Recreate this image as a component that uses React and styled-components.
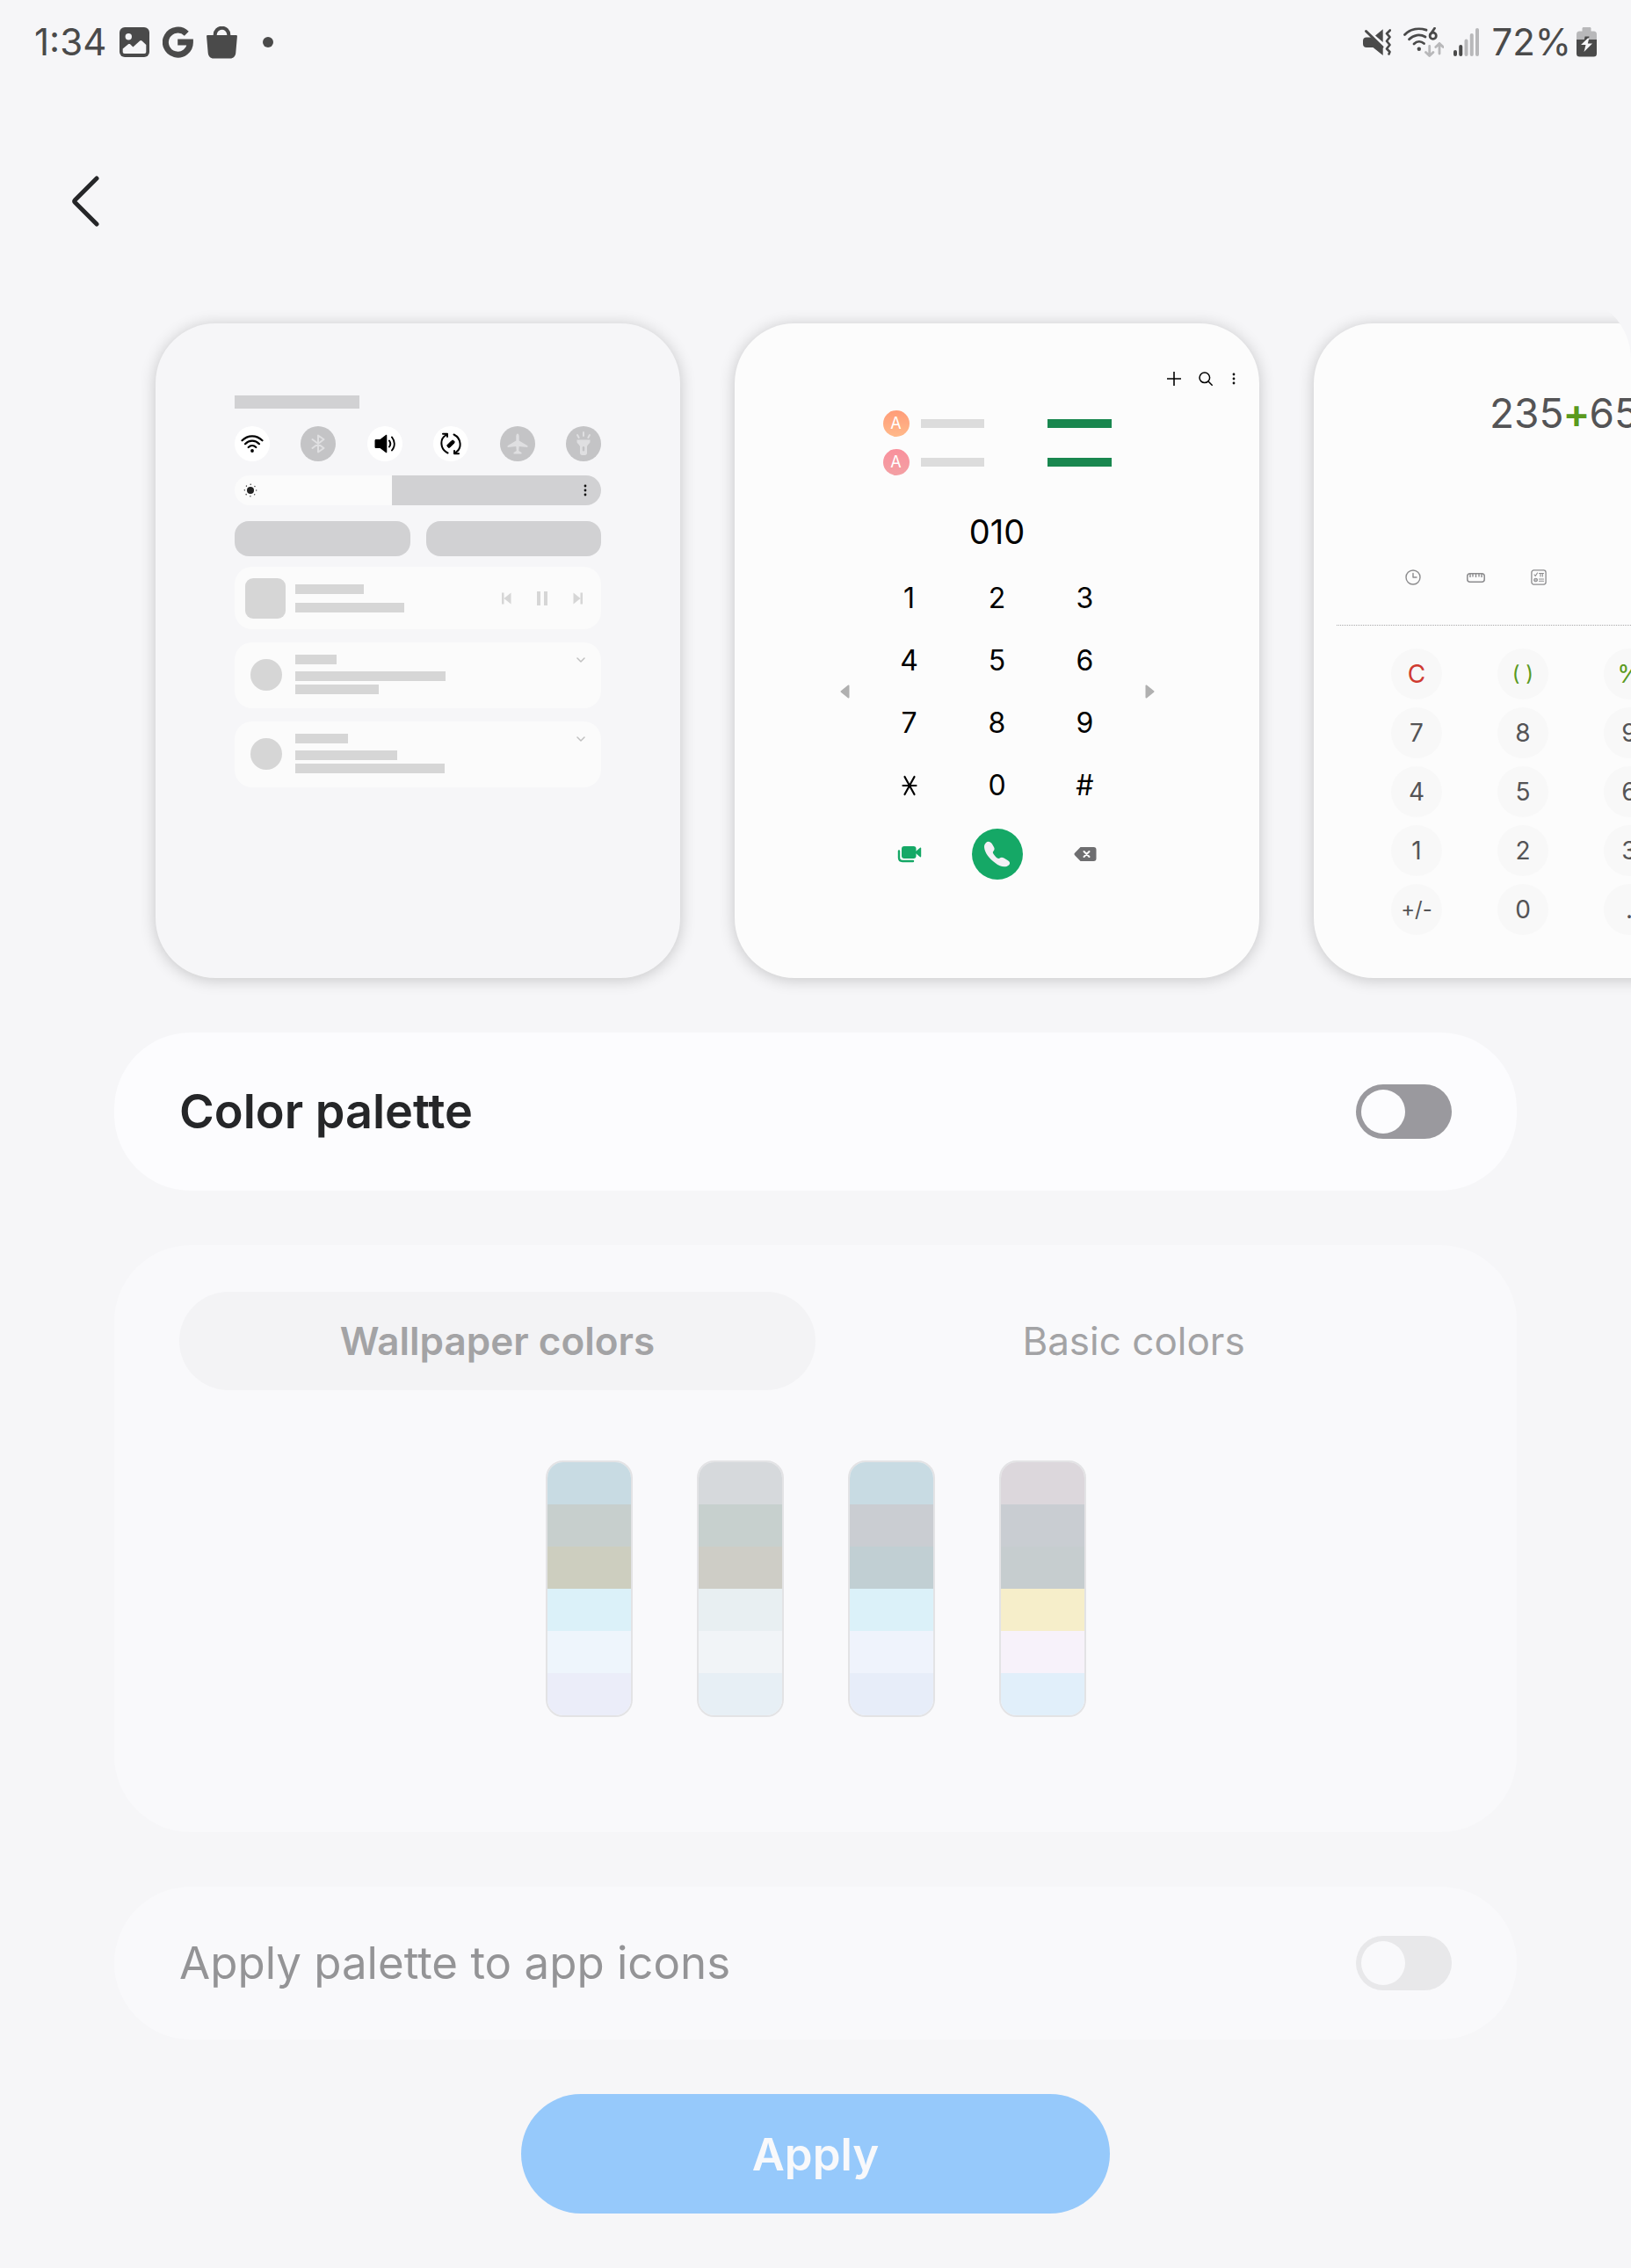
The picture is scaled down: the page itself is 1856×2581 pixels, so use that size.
import React, { useState } from "react";
import styled, { createGlobalStyle } from "styled-components";

const GlobalStyle = createGlobalStyle`
  * { box-sizing: border-box; }
  body {
    margin: 0;
    background: #f6f6f8;
    font-family: Inter, Roboto, sans-serif;
    -webkit-font-smoothing: antialiased;
  }
  button { font-family: inherit; border: 0; padding: 0; background: none; }
  svg { display: block; flex: none; }
`;

/* ---------- page frame ---------- */

const Page = styled.div`
  min-height: 100vh;
  background: #f6f6f8;
  overflow: hidden;
`;

const StatusBar = styled.header`
  display: flex;
  align-items: center;
  justify-content: space-between;
  height: 96px;
  padding: 0 39px;
  color: #4a4a4a;
  font-size: 42px;
  line-height: 50px;
`;

const StatusGroup = styled.div`
  display: flex;
  align-items: center;
  gap: ${(p) => p.$gap}px;
`;

const MoreDot = styled.span`
  width: 12px;
  height: 12px;
  margin-left: 14px;
  border-radius: 50%;
  background: currentColor;
`;

const AppBar = styled.nav`
  padding: 93px 57px 68px;
`;

const BackButton = styled.button`
  display: flex;
  align-items: center;
  justify-content: center;
  width: 80px;
  height: 80px;
  color: #252628;
`;

/* ---------- preview carousel ---------- */

const Carousel = styled.section`
  display: flex;
  gap: 62px;
  padding: 31px 0 62px 177px;
  border-top-right-radius: 72px;
  overflow: hidden;
`;

const PreviewCard = styled.article`
  display: flex;
  flex-direction: column;
  flex: none;
  width: 597px;
  height: 745px;
  border-radius: 68px;
  background: ${(p) => p.$bg};
  box-shadow: 0 2px 18px rgba(0, 0, 0, 0.2);
`;

const PanelPreview = styled(PreviewCard)`
  padding: 82px 90px;
`;

const Bar = styled.div`
  width: ${(p) => p.$w}px;
  height: ${(p) => p.$h || 11}px;
  background: ${(p) => p.$c || "#d6d6d6"};
`;

const ToggleRow = styled.div`
  display: flex;
  justify-content: space-between;
  margin-top: 20px;
`;

const RoundToggle = styled.div`
  display: flex;
  align-items: center;
  justify-content: center;
  width: 40px;
  height: 40px;
  border-radius: 50%;
  background: ${(p) => (p.$on ? "#ffffff" : "#c4c4c6")};
  color: ${(p) => (p.$on ? "#000000" : "#dfdfe1")};
`;

const Brightness = styled.div`
  display: flex;
  align-items: center;
  justify-content: space-between;
  height: 34px;
  margin-top: 16px;
  padding: 0 14px 0 10px;
  border-radius: 17px;
  background: linear-gradient(90deg, #fbfbfb 43%, #d1d1d3 43%);
`;

const PillRow = styled.div`
  display: grid;
  grid-template-columns: 1fr 1fr;
  gap: 18px;
  margin-top: 18px;
`;

const Pill = styled.div`
  height: 40px;
  border-radius: 16px;
  background: #d1d1d3;
`;

const Notice = styled.div`
  display: flex;
  align-items: ${(p) => (p.$media ? "center" : "flex-start")};
  height: ${(p) => (p.$media ? 71 : 75)}px;
  margin-top: ${(p) => (p.$media ? 12 : 15)}px;
  padding: ${(p) => (p.$media ? "0 20px 0 12px" : "14px 18px 0")};
  border-radius: 20px;
  background: #fbfbfb;
`;

const Thumb = styled.div`
  width: ${(p) => p.$size}px;
  height: ${(p) => p.$size}px;
  margin-top: ${(p) => (p.$round ? 5 : 0)}px;
  border-radius: ${(p) => (p.$round ? "50%" : "9px")};
  background: #d6d6d6;
`;

const Lines = styled.div`
  display: flex;
  flex: 1;
  flex-direction: column;
  gap: ${(p) => p.$gap}px;
  margin-left: ${(p) => p.$left}px;
`;

const MediaKeys = styled.div`
  display: flex;
  align-items: center;
  gap: 29px;
  color: #d6d6d6;
`;

const TextStack = styled.div`
  display: flex;
  flex-direction: column;
  gap: 4px;
  margin-top: 4px;
`;

/* ---------- dialer preview ---------- */

const DialPreview = styled(PreviewCard)`
  align-items: center;
`;

const DialTools = styled.div`
  display: flex;
  align-self: stretch;
  align-items: center;
  justify-content: flex-end;
  gap: 20px;
  height: 24px;
  margin-top: 51px;
  padding-right: 25px;
`;

const Contacts = styled.div`
  display: flex;
  flex-direction: column;
  gap: 14px;
  width: 260px;
  margin-top: 24px;
`;

const Contact = styled.div`
  display: flex;
  align-items: center;
  justify-content: space-between;
`;

const ContactName = styled.div`
  display: flex;
  align-items: center;
  gap: 13px;
`;

const Avatar = styled.span`
  width: 30px;
  border-radius: 50%;
  background: ${(p) => p.$bg};
  color: #fff;
  font-size: 18px;
  line-height: 30px;
  text-align: center;
`;

const Dialed = styled.output`
  margin-top: 40px;
  color: #000;
  font-size: 38px;
  line-height: 48px;
`;

const DialBody = styled.div`
  display: flex;
  align-items: center;
  justify-content: space-between;
  width: 358px;
  margin-top: 16px;
`;

const DialGrid = styled.div`
  display: grid;
  grid-template-columns: repeat(3, 100px);
`;

const DialKey = styled.button`
  display: flex;
  align-items: center;
  justify-content: center;
  height: 71px;
  color: #000;
  font-size: 32px;
`;

const DialActions = styled(DialGrid)`
  align-items: center;
  justify-items: center;
  margin-top: 14px;
`;

const CallButton = styled.button`
  width: 58px;
  height: 58px;
  border-radius: 50%;
  background: #15a866;
`;

/* ---------- calculator preview ---------- */

const Display = styled.output`
  display: flex;
  align-items: center;
  margin-top: 74px;
  padding-left: 200px;
  color: #545456;
  font-size: 46px;
  line-height: 56px;
`;

const Operator = styled.span`
  display: flex;
  justify-content: center;
  width: 29px;
  color: #5a9a1e;
  font-weight: 600;
`;

const CalcTools = styled.div`
  display: flex;
  align-items: center;
  gap: 52px;
  height: 20px;
  margin-top: 149px;
  padding-left: 104px;
  color: #8c8c8e;
`;

const Divider = styled.hr`
  align-self: stretch;
  margin: 44px 26px 26px;
  border: 0;
  border-top: 1px dotted #a8a8aa;
`;

const CalcGrid = styled.div`
  display: grid;
  grid-template-columns: repeat(3, 58px);
  gap: 9px 63px;
  padding-left: 88px;
`;

const CalcKey = styled.button`
  height: 58px;
  border-radius: 50%;
  background: #f8f8f8;
  color: ${(p) => p.$c || "#545456"};
  font-size: ${(p) => (p.$small ? 24 : 28)}px;
  line-height: 58px;
  white-space: nowrap;
`;

/* ---------- settings ---------- */

const Settings = styled.main`
  display: flex;
  flex-direction: column;
  align-items: center;
  gap: 62px;
  padding: 0 130px 62px;
`;

const SettingRow = styled.section`
  display: flex;
  align-items: center;
  justify-content: space-between;
  align-self: stretch;
  height: ${(p) => (p.$dim ? 174 : 180)}px;
  padding: 0 74px;
  border-radius: 87px;
  background: ${(p) => (p.$dim ? "#f9f9fb" : "#fcfcfe")};
`;

const SettingLabel = styled.label`
  color: ${(p) => (p.$dim ? "#949496" : "#252628")};
  font-size: ${(p) => (p.$dim ? 51 : 54)}px;
  font-weight: ${(p) => (p.$dim ? 400 : 600)};
  line-height: 68px;
`;

const Switch = styled.input`
  appearance: none;
  display: flex;
  align-items: center;
  justify-content: ${(p) => (p.checked ? "flex-end" : "flex-start")};
  width: 109px;
  height: 62px;
  margin: 0;
  padding: 0 6px;
  border-radius: 31px;
  background: #9a999e;

  &::before {
    content: "";
    width: 50px;
    height: 50px;
    border-radius: 50%;
    background: #fcfcfe;
  }

  &:disabled { background: #e8e8ea; }
  &:disabled::before { background: #f9f9fb; }
`;

const PalettePanel = styled.section`
  align-self: stretch;
  padding: 53px 74px 131px;
  border-radius: 87px;
  background: #f9f9fb;
`;

const Tabs = styled.div`
  display: grid;
  grid-template-columns: 1fr 1fr;
`;

const Tab = styled.button`
  height: 112px;
  border-radius: 56px;
  background: ${(p) => (p["aria-selected"] ? "#f3f3f5" : "transparent")};
  color: #a3a3a5;
  font-size: 44px;
  font-weight: ${(p) => (p["aria-selected"] ? 600 : 400)};
`;

const Swatches = styled.div`
  display: flex;
  justify-content: center;
  gap: 73px;
  margin-top: 80px;
`;

const Swatch = styled.button`
  display: flex;
  flex-direction: column;
  width: 99px;
  border: 2px solid #e3e3e5;
  border-radius: 20px;
  overflow: hidden;
`;

const Tone = styled.span`
  align-self: stretch;
  height: 48px;
  background: ${(p) => p.$c};
`;

const ApplyButton = styled.button`
  width: 670px;
  max-width: 100%;
  height: 136px;
  border-radius: 68px;
  background: #96c9fb;
  color: #f8f9fb;
  font-size: 51px;
  font-weight: 600;
`;

/* ---------- icons ---------- */

const stroke = { fill: "none", stroke: "currentColor", strokeLinecap: "round", strokeLinejoin: "round" };

const ImageIcon = () => (
  <svg width="34" height="34" viewBox="0 0 34 34">
    <rect width="34" height="34" rx="6" fill="currentColor" />
    <circle cx="10.3" cy="10.8" r="3.7" fill="#f6f6f8" />
    <path d="M3.7 24.5 10 19.3c.7-.6 1.500-.5 2.100 0l3.300 3.200 7.700-7c.8-.8 1.600-.8 2.400 0l4.800 4.600V28c0 1.200-.8 2-2 2H5.700c-1.200 0-2-.8-2-2z" fill="#f6f6f8" />
  </svg>
);

const GIcon = () => (
  <svg width="35" height="36" viewBox="0 0 35 36">
    <path d="M27.3 8.2A14 14 0 1 0 31.4 18H17.2" fill="none" stroke="currentColor" strokeWidth="7" />
  </svg>
);

const BagIcon = () => (
  <svg width="35" height="37" viewBox="0 0 35 37">
    <path d="M9.7 12.5V9.5a7.800 7.800 0 0 1 15.600 0v3" fill="none" stroke="currentColor" strokeWidth="4" />
    <path d="M1.500 10h32c1 0 1.500.5 1.400 1.500L33.300 30c-.4 4-2.500 6.500-6.500 6.500H8.200c-4 0-6.100-2.500-6.500-6.500L.1 11.500C0 10.500.5 10 1.500 10z" fill="currentColor" />
  </svg>
);

const MuteIcon = () => (
  <svg width="32" height="30" viewBox="0 0 32 30">
    <path d="M14 7.500 22.700.3V15z" fill="currentColor" />
    <path d="M4 9.500h5L22.700 22v8L11.500 21H4c-2.500 0-4-1.500-4-4v-3.500c0-2.500 1.500-4 4-4z" fill="currentColor" />
    <path d="M3.500 2.500 22 20.500" {...stroke} strokeWidth="3" />
    <path d="M30.800 1.500 27 5.200l3.500 4-3.500 4.500 3.500 4.300-3.500 4.500 3.500 3.500-1 2.500" {...stroke} strokeWidth="2.600" />
  </svg>
);

const WifiStatusIcon = () => (
  <svg width="46" height="34" viewBox="0 0 46 34">
    <g {...stroke} strokeWidth="2.800">
      <path d="M1.500 8.500C8.500 1.500 18 .5 26 3.200" />
      <path d="M6.500 13.800C11.500 8.500 19 7.500 25 11" />
      <path d="M12 19c3.500-3.500 8-3.500 11.500-.5" />
    </g>
    <circle cx="17.800" cy="24.700" r="2.200" fill="currentColor" />
    <path d="M35.500 1.200 30.800 8" {...stroke} strokeWidth="2.800" />
    <circle cx="33.700" cy="9.800" r="3.600" fill="none" stroke="currentColor" strokeWidth="2.800" />
    <g {...stroke} stroke="#b8b8ba" strokeWidth="2.800">
      <path d="M29.700 21.500v11M25.500 28.500l4.200 4 4.200-4" />
      <path d="M41 30V18.500M36.800 22.500l4.200-4 4.200 4" />
    </g>
  </svg>
);

const SignalIcon = () => (
  <svg width="29" height="32" viewBox="0 0 29 32">
    {[25, 19, 12.5, 6, 0].map((y, i) => (
      <rect key={y} x={i * 6.25} y={y} width="4" height={32 - y} rx="2" fill={i < 2 ? "currentColor" : "#b8b8ba"} />
    ))}
  </svg>
);

const BatteryIcon = () => (
  <svg width="23" height="34" viewBox="0 0 23 34">
    <path d="M8 0h7c1 0 1.500.6 1.500 1.500V5h-10V1.500C6.500.6 7 0 8 0z" fill="#b8b8ba" />
    <path d="M3.500 4.500h16A3.500 3.500 0 0 1 23 8v6H0V8a3.500 3.500 0 0 1 3.500-3.500z" fill="#b8b8ba" />
    <path d="M0 14h23v16a3.500 3.500 0 0 1-3.500 3.500h-16A3.500 3.500 0 0 1 0 30z" fill="currentColor" />
    <path d="M9.500 10.500h5l-1 5-5 1z" fill="currentColor" />
    <path d="M12.800 12.500 5 20h5.500l-2 8L18 18.500h-5.200l1.500-6z" fill="#f6f6f8" />
  </svg>
);

const BackIcon = () => (
  <svg width="32" height="60" viewBox="0 0 32 60">
    <path d="M29 4 4.500 28.500c-1 1-1 2 0 3L29 56" {...stroke} strokeWidth="5" />
  </svg>
);

const WifiIcon = () => (
  <svg width="26" height="22" viewBox="0 0 26 22">
    <g {...stroke} strokeWidth="2.200">
      <path d="M1.500 7.300C8 .6 18 .6 24.500 7.300" />
      <path d="M5 11.200c4.500-4.700 11.500-4.700 16 0" />
      <path d="M8.700 15c2.500-2.400 6.100-2.400 8.600 0" />
    </g>
    <circle cx="13" cy="19" r="1.900" fill="currentColor" />
  </svg>
);

const BluetoothIcon = () => (
  <svg width="16" height="22" viewBox="0 0 16 22">
    <path d="m1.500 6 13 10L8 20.500v-19L14.500 6l-13 10" {...stroke} strokeWidth="2" />
  </svg>
);

const SoundIcon = () => (
  <svg width="24" height="22" viewBox="0 0 24 22">
    <path d="M2 6h4.500L13 1c.8-.6 1.300-.2 1.300.6v18.800c0 .8-.5 1.200-1.300.6L6.500 16H2c-1 0-1.500-.5-1.500-1.500v-7C.5 6.500 1 6 2 6z" fill="currentColor" />
    <path d="M17 7.500c1.600 2.200 1.600 4.800 0 7M20 3.500c3.600 4.600 3.600 10.400 0 15" {...stroke} strokeWidth="2" />
  </svg>
);

const RotateIcon = () => (
  <svg width="24" height="26" viewBox="0 0 24 26">
    <path d="M8.500 23.500C-.5 19-.5 7.500 6 3.500M3 1.800h5V5M15.500 2.500c9 4.500 9 16 2.500 20M21 24.200h-5V21" {...stroke} strokeWidth="2" />
    <path d="m8 14.500 5-5 1.500-.5 1.500 1.500v1.500l-5 5-1.500.5L8 16z" fill="currentColor" stroke="currentColor" />
  </svg>
);

const PlaneIcon = () => (
  <svg width="24" height="24" viewBox="0 0 24 24">
    <path d="M12 .5c1.100 0 1.700 1.500 1.700 3v5L23 14c.7.5.7 2 0 2l-9.300-1-.4 5 3 2c.6.5.5 1.500-.2 1.500H7.900c-.7 0-.8-1-.2-1.500l3-2-.4-5-9.300 1c-.7 0-.7-1.500 0-2l9.300-5.500v-5c0-1.500.6-3 1.700-3z" fill="currentColor" />
  </svg>
);

const TorchIcon = () => (
  <svg width="18" height="28" viewBox="0 0 18 28">
    <path d="M9 1v4M2 4l1.700 3M16 4l-1.700 3" {...stroke} strokeWidth="2" />
    <path d="M1.500 9.500h15v2.500c0 1.500-3.500 3.500-3.500 5.500v7c0 1.500-1 2.500-2.500 2.500h-3C6 27 5 26 5 24.500v-7c0-2-3.500-4-3.500-5.500z" fill="currentColor" />
    <rect x="7.800" y="17" width="2.400" height="5.500" rx="1.200" fill="#c4c4c6" />
  </svg>
);

const SunIcon = () => (
  <svg width="16" height="16" viewBox="0 0 16 16">
    <circle cx="8" cy="8" r="4" fill="#222" />
    <circle cx="8" cy="8" r="6.700" fill="none" stroke="#444" strokeWidth="1.400" strokeLinecap="round" strokeDasharray="0.1 5.162" />
  </svg>
);

const DotsIcon = () => (
  <svg width="8" height="16" viewBox="0 0 8 16">
    {[3, 8, 13].map((y) => (
      <circle key={y} cx="4" cy={y} r="1.400" fill="#111" />
    ))}
  </svg>
);

const SkipIcon = ({ forward }) => (
  <svg width="12" height="14" viewBox="0 0 12 14">
    <path d={forward ? "M.5.5v13L8.500 7zM8.500.5h2.500v13H8.500z" : "M11.500.5v13L3.500 7zM1 .5h2.500v13H1z"} fill="currentColor" />
  </svg>
);

const PauseIcon = () => (
  <svg width="12" height="16" viewBox="0 0 12 16">
    <path d="M0 0h4v16H0zM8 0h4v16H8z" fill="currentColor" />
  </svg>
);

const ChevronIcon = () => (
  <svg width="10" height="12" viewBox="0 0 10 12">
    <path d="m1 4 4 4 4-4" {...stroke} stroke="#c0c0c0" strokeWidth="1.500" />
  </svg>
);

const PlusIcon = () => (
  <svg width="16" height="16" viewBox="0 0 16 16">
    <path d="M8 .5v15M.5 8h15" {...stroke} strokeWidth="1.600" />
  </svg>
);

const SearchIcon = () => (
  <svg width="16" height="16" viewBox="0 0 16 16">
    <circle cx="6.800" cy="6.800" r="5.800" {...stroke} strokeWidth="1.500" />
    <path d="m11 11 4.200 4.200" {...stroke} strokeWidth="1.500" />
  </svg>
);

const ArrowIcon = ({ right }) => (
  <svg width="11" height="16" viewBox="0 0 11 16">
    <path d={right ? "M1.500 1.500v13l8-6.500z" : "M9.500 1.500v13L1.500 8z"} fill="#b0b0b0" stroke="#b0b0b0" strokeWidth="2" strokeLinejoin="round" />
  </svg>
);

const StarIcon = () => (
  <svg width="18" height="24" viewBox="0 0 18 24">
    <path d="M1.500 12h15M3.500 2l11 20M14.500 2l-11 20" {...stroke} strokeWidth="2.200" />
  </svg>
);

const VideoIcon = () => (
  <svg width="28" height="20" viewBox="0 0 28 20">
    <path d="M2 6.500V14c0 2.500 1.500 4 4 4h12" {...stroke} stroke="#15a866" strokeWidth="2.400" />
    <rect x="5" y="1" width="16.500" height="14" rx="3" fill="#15a866" />
    <path d="m21 7 5-4.200c.6-.5 1.200-.2 1.200.6v9.200c0 .8-.6 1.100-1.200.6L21 9z" fill="#15a866" />
  </svg>
);

const HandsetIcon = () => (
  <svg width="58" height="58" viewBox="0 0 58 58">
    <path d="M16 16c2-2 5-1.500 7 1.500l2 3.500c1 2 .8 3-.8 5-.8 1-.4 2 1.800 4.800s4 3.800 5.300 3c1.700-1.300 3.200-1.300 5.200-.3l4.500 2.800c2.500 1.600 2.800 3.700 1 5.200-3.500 3-9.500 2.500-15.500-2.500C19.500 34 14.500 27.500 14 21c0-2 .5-3.500 2-5z" fill="#f3f0f5" />
  </svg>
);

const BackspaceIcon = () => (
  <svg width="26" height="18" viewBox="0 0 26 18">
    <path d="M7.500 1h15C24.500 1 25.500 2 25.500 4v10c0 2-1 3-3 3h-15L1 10.200c-.7-.7-.7-1.700 0-2.400z" fill="#6e6e70" />
    <path d="m11.500 6 6 6M17.500 6l-6 6" {...stroke} stroke="#fff" strokeWidth="2" />
  </svg>
);

const ClockIcon = () => (
  <svg width="18" height="18" viewBox="0 0 18 18">
    <circle cx="9" cy="9" r="8" {...stroke} strokeWidth="1.400" />
    <path d="M9 4.500V9h4" {...stroke} strokeWidth="1.400" />
  </svg>
);

const RulerIcon = () => (
  <svg width="21" height="11" viewBox="0 0 21 11">
    <rect x=".8" y=".8" width="19.400" height="9.400" rx="3" {...stroke} strokeWidth="1.500" />
    <path d="M4 1v4M7 1v3.500M10.500 1v4M14 1v3.500M17 1v4" stroke="currentColor" strokeWidth="1.400" />
  </svg>
);

const FormulaIcon = () => (
  <svg width="18" height="18" viewBox="0 0 18 18">
    <rect x=".9" y=".9" width="16.200" height="16.200" rx="2.500" {...stroke} strokeWidth="1.300" />
    <path d="m4 6 1.200 1.500L7.500 4M9.500 4.500h5M11 4.500V8M13.300 4.500V8M9.500 11h5M9.500 13.300h5" {...stroke} strokeWidth="1.100" />
    <circle cx="5.600" cy="12" r="1.800" {...stroke} strokeWidth="1.100" />
    <path d="M4 12h3.500" {...stroke} strokeWidth="1" />
  </svg>
);

/* ---------- data ---------- */

const palettes = [
  ["#c8dbe3", "#c7cfcd", "#cdcebf", "#dbf1f9", "#eef5fc", "#ebedf9"],
  ["#d6d9dc", "#c7d0ce", "#cecdc6", "#e8eff2", "#f1f4f7", "#e7eff5"],
  ["#c8dbe3", "#cacdd2", "#c1cfd3", "#dbf1f9", "#eff3fc", "#e7edf9"],
  ["#dcd7dc", "#c9cdd2", "#c6cdcf", "#f6eeca", "#f7f2fa", "#e1effa"],
];

const GREEN = "#5a9a1e";
const calcKeys = [
  ["C", "#cf3a30"], ["( )", GREEN, true], ["%", GREEN],
  ["7"], ["8"], ["9"], ["4"], ["5"], ["6"], ["1"], ["2"], ["3"],
  ["+/-", null, true], ["0"], ["."],
];

const toggles = [
  [WifiIcon, true], [BluetoothIcon, false], [SoundIcon, true],
  [RotateIcon, true], [PlaneIcon, false], [TorchIcon, false],
];

const notices = [[47, 171, 95], [60, 116, 170]];

/* ---------- views ---------- */

const QuickPanel = () => (
  <PanelPreview $bg="#f6f6f8">
    <Bar $w={142} $h={15} $c="#d1d1d3" />
    <ToggleRow>
      {toggles.map(([Icon, on], i) => (
        <RoundToggle key={i} $on={on}><Icon /></RoundToggle>
      ))}
    </ToggleRow>
    <Brightness><SunIcon /><DotsIcon /></Brightness>
    <PillRow><Pill /><Pill /></PillRow>
    <Notice $media>
      <Thumb $size={46} />
      <Lines $gap={10} $left={11}><Bar $w={78} /><Bar $w={124} /></Lines>
      <MediaKeys><SkipIcon /><PauseIcon /><SkipIcon forward /></MediaKeys>
    </Notice>
    {notices.map(([a, b, c]) => (
      <Notice key={a}>
        <Thumb $size={36} $round />
        <Lines $gap={4} $left={15}>
          <Bar $w={a} />
          <TextStack><Bar $w={b} /><Bar $w={c} /></TextStack>
        </Lines>
        <ChevronIcon />
      </Notice>
    ))}
  </PanelPreview>
);

const Dialer = () => (
  <DialPreview $bg="#fcfcfc">
    <DialTools><PlusIcon /><SearchIcon /><DotsIcon /></DialTools>
    <Contacts>
      {["linear-gradient(#ff9c78, #ffb98a)", "linear-gradient(#f9909c, #f3a0a4)"].map((bg) => (
        <Contact key={bg}>
          <ContactName><Avatar $bg={bg}>A</Avatar><Bar $w={72} $h={10} $c="#dcdcdc" /></ContactName>
          <Bar $w={73} $h={10} $c="#19874f" />
        </Contact>
      ))}
    </Contacts>
    <Dialed>010</Dialed>
    <DialBody>
      <ArrowIcon />
      <DialGrid>
        {["1", "2", "3", "4", "5", "6", "7", "8", "9", "*", "0", "#"].map((k) => (
          <DialKey key={k} type="button" aria-label={k === "*" ? "star" : undefined}>
            {k === "*" ? <StarIcon /> : k}
          </DialKey>
        ))}
      </DialGrid>
      <ArrowIcon right />
    </DialBody>
    <DialActions>
      <VideoIcon />
      <CallButton type="button" aria-label="Call"><HandsetIcon /></CallButton>
      <BackspaceIcon />
    </DialActions>
  </DialPreview>
);

const Calculator = () => (
  <PreviewCard $bg="#fcfcfc">
    <Display>235<Operator>+</Operator>65</Display>
    <CalcTools><ClockIcon /><RulerIcon /><FormulaIcon /></CalcTools>
    <Divider />
    <CalcGrid>
      {calcKeys.map(([k, c, small]) => (
        <CalcKey key={k} type="button" $c={c} $small={small}>{k}</CalcKey>
      ))}
    </CalcGrid>
  </PreviewCard>
);

export default function App() {
  const [enabled, setEnabled] = useState(false);

  return (
    <Page>
      <GlobalStyle />
      <StatusBar>
        <StatusGroup $gap={15}>
          <span>1:34</span>
          <ImageIcon />
          <GIcon />
          <BagIcon />
          <MoreDot />
        </StatusGroup>
        <StatusGroup $gap={6}>
          <StatusGroup $gap={14}>
            <MuteIcon />
            <StatusGroup $gap={11}><WifiStatusIcon /><SignalIcon /></StatusGroup>
            <span>72%</span>
          </StatusGroup>
          <BatteryIcon />
        </StatusGroup>
      </StatusBar>

      <AppBar>
        <BackButton type="button" aria-label="Back"><BackIcon /></BackButton>
      </AppBar>

      <Carousel>
        <QuickPanel />
        <Dialer />
        <Calculator />
      </Carousel>

      <Settings>
        <SettingRow>
          <SettingLabel htmlFor="palette">Color palette</SettingLabel>
          <Switch id="palette" type="checkbox" role="switch" checked={enabled} onChange={(e) => setEnabled(e.target.checked)} />
        </SettingRow>

        <PalettePanel>
          <Tabs role="tablist">
            <Tab type="button" role="tab" aria-selected={true} disabled>Wallpaper colors</Tab>
            <Tab type="button" role="tab" aria-selected={false} disabled>Basic colors</Tab>
          </Tabs>
          <Swatches>
            {palettes.map((tones, i) => (
              <Swatch key={i} type="button" aria-label={`Palette ${i + 1}`} disabled>
                {tones.map((c) => <Tone key={c} $c={c} />)}
              </Swatch>
            ))}
          </Swatches>
        </PalettePanel>

        <SettingRow $dim>
          <SettingLabel $dim htmlFor="icons">Apply palette to app icons</SettingLabel>
          <Switch id="icons" type="checkbox" role="switch" checked={false} readOnly disabled />
        </SettingRow>

        <ApplyButton type="button">Apply</ApplyButton>
      </Settings>
    </Page>
  );
}
